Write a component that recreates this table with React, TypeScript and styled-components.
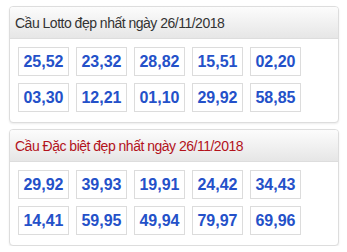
import React from 'react';
import styled, { createGlobalStyle } from 'styled-components';

const GlobalStyle = createGlobalStyle`
    body {
        margin: 0;
        background: #ffffff;
        font-family: 'Liberation Sans', Arial, sans-serif;
    }
`;

const Page = styled.div`
    padding: 6px 8px 0 9px;
    display: flex;
    flex-direction: column;
    gap: 6px;
`;

const Panel = styled.section`
    width: 330px;
    box-sizing: border-box;
    border: 1px solid #dddddd;
    border-radius: 4px;
    background: #ffffff;
    box-shadow: 0 1px 2px rgba(0, 0, 0, 0.08);
    overflow: hidden;
`;

const Header = styled.h2<{ $special?: boolean }>`
    margin: 0;
    height: 31px;
    padding: 0 5px;
    display: flex;
    align-items: center;
    font-size: 14px;
    letter-spacing: -0.5px;
    font-weight: normal;
    color: ${(p) => (p.$special ? '#b3121b' : '#333333')};
    background: linear-gradient(#fcfcfc, #e6e6e6);
    border-bottom: 1px solid #dddddd;
`;

const Grid = styled.div`
    display: grid;
    grid-template-columns: repeat(5, 51px);
    gap: 7px;
    padding: 8px 8px 10px 8px;
`;

const NumberBox = styled.div`
    height: 29px;
    box-sizing: border-box;
    border: 1px solid #dcdcdc;
    display: flex;
    align-items: center;
    justify-content: center;
    font-size: 16px;
    font-weight: bold;
    color: #2451c9;
`;

const lotto = ['25,52', '23,32', '28,82', '15,51', '02,20', '03,30', '12,21', '01,10', '29,92', '58,85'];
const special = ['29,92', '39,93', '19,91', '24,42', '34,43', '14,41', '59,95', '49,94', '79,97', '69,96'];

const App: React.FC = () => {
    return (
        <>
            <GlobalStyle />
            <Page>
                <Panel>
                    <Header>Cầu Lotto đẹp nhất ngày 26/11/2018</Header>
                    <Grid>
                        {lotto.map((n, i) => (
                            <NumberBox key={i}>{n}</NumberBox>
                        ))}
                    </Grid>
                </Panel>
                <Panel>
                    <Header $special>Cầu Đặc biệt đẹp nhất ngày 26/11/2018</Header>
                    <Grid>
                        {special.map((n, i) => (
                            <NumberBox key={i}>{n}</NumberBox>
                        ))}
                    </Grid>
                </Panel>
            </Page>
        </>
    );
};

export default App;
